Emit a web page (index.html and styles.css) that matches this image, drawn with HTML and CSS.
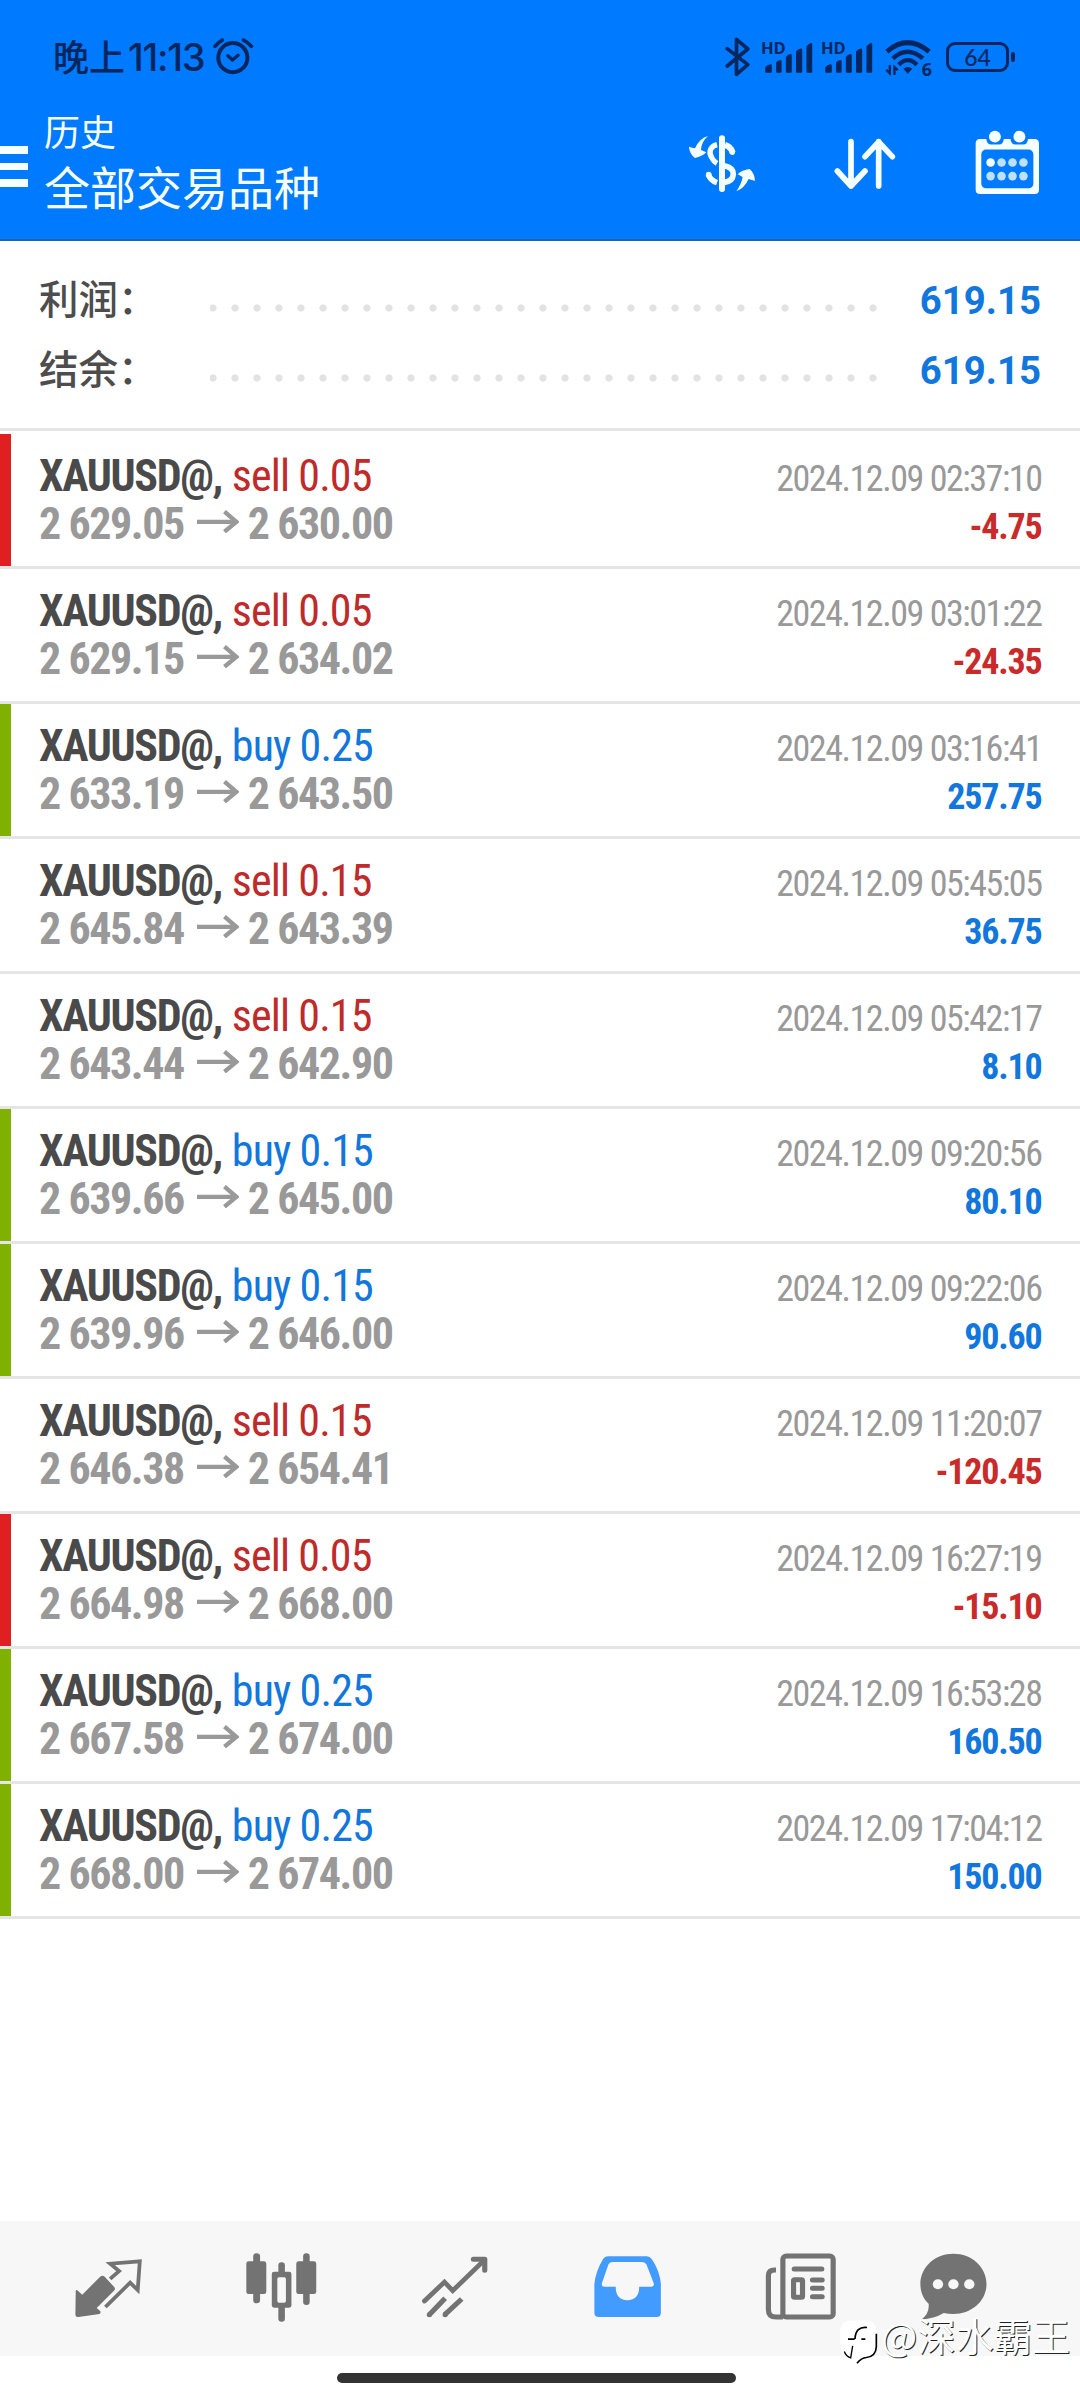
FILE: index.html
```html
<!DOCTYPE html>
<html lang="zh-CN">
<head>
<meta charset="utf-8">
<title>历史</title>
<link rel="stylesheet" href="styles.css">
</head>
<body>
<svg class="defs" width="0" height="0">
  <symbol id="arrow" viewBox="0 0 127 68"><path d="M0 35H120M83 4L119 35L83 65" fill="none" stroke="currentColor" stroke-width="13"/></symbol>
  <symbol id="signal" viewBox="0 0 154 104"><path d="M9 94v-14q5-8 16-9q4 0 4 4v19q0 3-3 3h-14q-3 0-3-3zM42 66q5-7 13-8q4 0 4 4v32q0 3-3 3h-11q-3 0-3-3zM72 49q5-8 14-9q4 0 4 4v50q0 3-3 3h-12q-3 0-3-3zM103 32q6-8 15-9q4 0 4 4v67q0 3-3 3h-13q-3 0-3-3zM135 17q6-9 14-11q4 0 4 4v84q0 3-3 3h-12q-3 0-3-3z" fill="currentColor"/></symbol>
</svg>
<div class="screen">
  <header class="header">
    <div class="status">
      <div class="status-left">
        <span class="daypart">晚上</span><span class="time">11:13</span>
        <svg class="alarm" viewBox="640 112 124 114" fill="none" stroke="currentColor" stroke-linecap="round"><circle cx="700" cy="174" r="44" stroke-width="12"/><path d="M646 140Q655 128 668 121M756 140Q747 128 732 121" stroke-width="11"/><path d="M685 168L699 181L716 167" stroke-width="10" stroke-linejoin="round"/></svg>
      </div>
      <div class="status-right">
        <svg class="bt" viewBox="194 110 80 120" fill="none" stroke="currentColor" stroke-width="11" stroke-linecap="round" stroke-linejoin="round"><path d="M203 145L265 193L231 222V117L265 146L203 197"/></svg>
        <div class="sim"><svg viewBox="0 0 154 104"><use href="#signal"/></svg><span>HD</span></div>
        <div class="sim"><svg viewBox="0 0 154 104"><use href="#signal"/></svg><span>HD</span></div>
        <div class="wifi"><svg viewBox="672 118 144 112" fill="none" stroke="currentColor"><path d="M680 156Q742 102 808 156" stroke-width="15"/><path d="M698 177Q742 136 789 177" stroke-width="13"/><path d="M716 196Q743 168 771 196" stroke-width="13"/><path d="M730 208Q743 197 757 208L743 223Z" fill="currentColor" stroke="none"/><path d="M689 197V222L678 211M703 227V203L713 212" stroke-width="7"/></svg><span>6</span></div>
        <div class="battery"><span>64</span></div>
      </div>
    </div>
    <div class="toolbar">
      <div class="menu"><i></i><i></i><i></i></div>
      <div class="titles"><div class="title-small">历史</div><div class="title-big">全部交易品种</div></div>
      <div class="actions">
        <svg class="a-dollar" viewBox="84 400 204 180" fill="none" stroke="#f6ffff"><path d="M186 416V568" stroke-width="18" stroke-linecap="round"/><path d="M171 435C150 440 145 458 155 474Q161 486 171 491" stroke-width="16"/><path d="M195 436Q213 441 218 459" stroke-width="18" stroke-linecap="butt"/><circle cx="217" cy="458" r="8" fill="#f6ffff" stroke="none"/><path d="M194 498Q221 504 220 524Q218 545 194 548" stroke-width="17"/><path d="M145 524Q150 542 171 549" stroke-width="17"/><circle cx="146" cy="525" r="8.500" fill="#f6ffff" stroke="none"/><g fill="#f6ffff" stroke="none"><path d="M144 409Q119 415 105 446Q96 444 87 441Q88 462 105 475Q126 471 139 458L123 451Q124 426 144 409Z"/><path d="M229 575Q253 566 266 538Q275 541 285 543Q284 521 269 508Q246 511 233 524L248 532Q244 554 229 575Z"/></g></svg>
        <svg class="a-sort" viewBox="522 414 186 156" fill="none" stroke="#f6ffff" stroke-width="17" stroke-linecap="round" stroke-linejoin="round"><path d="M573 425V558M532 513L573 558L615 513M656 558V425M615 470L656 426L697 470"/></svg>
        <svg class="a-cal" viewBox="944 390 194 196"><path d="M955 417H977Q979 434 992 434H1015Q1028 434 1030 417H1050Q1052 434 1065 434H1089Q1101 434 1103 417H1125Q1136 419 1136 430V570Q1136 583 1123 583H958Q945 583 945 570V430Q945 419 955 417Z" fill="#f6ffff"/><rect x="962" y="449" width="157" height="117" rx="14" fill="#007aff"/><g fill="#f6ffff"><circle cx="1003" cy="410" r="18"/><circle cx="1077" cy="410" r="18"/><circle cx="990" cy="488" r="13"/></g><g fill="#bfe0ff"><circle cx="1023" cy="488" r="13"/><circle cx="1056" cy="488" r="13"/><circle cx="1089" cy="488" r="13"/><circle cx="990" cy="529" r="13"/><circle cx="1023" cy="529" r="13"/><circle cx="1056" cy="529" r="13"/><circle cx="1089" cy="529" r="13"/></g></svg>
      </div>
    </div>
  </header>
  <section class="summary">
    <div class="sum-row"><span class="label">利润：</span><span class="dots"></span><span class="amount">619.15</span></div>
    <div class="sum-row"><span class="label">结余：</span><span class="dots"></span><span class="amount">619.15</span></div>
  </section>
  <main class="deals">
    <article class="deal loss"><div class="line"><b>XAUUSD@, <span class="sell">sell 0.05</span></b><time>2024.12.09 02:37:10</time></div><div class="line"><span class="price">2 629.05<svg class="arrow"><use href="#arrow"/></svg>2 630.00</span><span class="result neg">-4.75</span></div></article>
    <article class="deal"><div class="line"><b>XAUUSD@, <span class="sell">sell 0.05</span></b><time>2024.12.09 03:01:22</time></div><div class="line"><span class="price">2 629.15<svg class="arrow"><use href="#arrow"/></svg>2 634.02</span><span class="result neg">-24.35</span></div></article>
    <article class="deal gain"><div class="line"><b>XAUUSD@, <span class="buy">buy 0.25</span></b><time>2024.12.09 03:16:41</time></div><div class="line"><span class="price">2 633.19<svg class="arrow"><use href="#arrow"/></svg>2 643.50</span><span class="result">257.75</span></div></article>
    <article class="deal"><div class="line"><b>XAUUSD@, <span class="sell">sell 0.15</span></b><time>2024.12.09 05:45:05</time></div><div class="line"><span class="price">2 645.84<svg class="arrow"><use href="#arrow"/></svg>2 643.39</span><span class="result">36.75</span></div></article>
    <article class="deal"><div class="line"><b>XAUUSD@, <span class="sell">sell 0.15</span></b><time>2024.12.09 05:42:17</time></div><div class="line"><span class="price">2 643.44<svg class="arrow"><use href="#arrow"/></svg>2 642.90</span><span class="result">8.10</span></div></article>
    <article class="deal gain"><div class="line"><b>XAUUSD@, <span class="buy">buy 0.15</span></b><time>2024.12.09 09:20:56</time></div><div class="line"><span class="price">2 639.66<svg class="arrow"><use href="#arrow"/></svg>2 645.00</span><span class="result">80.10</span></div></article>
    <article class="deal gain"><div class="line"><b>XAUUSD@, <span class="buy">buy 0.15</span></b><time>2024.12.09 09:22:06</time></div><div class="line"><span class="price">2 639.96<svg class="arrow"><use href="#arrow"/></svg>2 646.00</span><span class="result">90.60</span></div></article>
    <article class="deal"><div class="line"><b>XAUUSD@, <span class="sell">sell 0.15</span></b><time>2024.12.09 11:20:07</time></div><div class="line"><span class="price">2 646.38<svg class="arrow"><use href="#arrow"/></svg>2 654.41</span><span class="result neg">-120.45</span></div></article>
    <article class="deal loss"><div class="line"><b>XAUUSD@, <span class="sell">sell 0.05</span></b><time>2024.12.09 16:27:19</time></div><div class="line"><span class="price">2 664.98<svg class="arrow"><use href="#arrow"/></svg>2 668.00</span><span class="result neg">-15.10</span></div></article>
    <article class="deal gain"><div class="line"><b>XAUUSD@, <span class="buy">buy 0.25</span></b><time>2024.12.09 16:53:28</time></div><div class="line"><span class="price">2 667.58<svg class="arrow"><use href="#arrow"/></svg>2 674.00</span><span class="result">160.50</span></div></article>
    <article class="deal gain"><div class="line"><b>XAUUSD@, <span class="buy">buy 0.25</span></b><time>2024.12.09 17:04:12</time></div><div class="line"><span class="price">2 668.00<svg class="arrow"><use href="#arrow"/></svg>2 674.00</span><span class="result">150.00</span></div></article>
  </main>
  <nav class="nav">
    <div class="tab"><svg viewBox="215 130 200 210" preserveAspectRatio="none"><path d="M220 243Q222 239 226 243L239 255L291 201Q298 195 304 201L331 231Q337 237 331 243L281 295L291 304Q294 309 289 313L228 322Q219 323 219 315Z" fill="#737373"/><path d="M324 204L346 184L320 162L406 155L400 241L378 219L310 288" fill="none" stroke="#737373" stroke-width="11" stroke-linecap="square" stroke-linejoin="miter"/></svg></div>
    <div class="tab"><svg viewBox="716 130 200 210" preserveAspectRatio="none" fill="#737373"><rect x="714" y="155" width="58" height="98" rx="7"/><rect x="734" y="131" width="20" height="150" rx="10"/><rect x="859" y="155" width="58" height="98" rx="7"/><rect x="879" y="131" width="19" height="155" rx="9"/><rect x="807" y="158" width="19" height="178" rx="9"/><rect x="788" y="186" width="57" height="108" rx="7"/><rect x="804" y="203" width="25" height="76" rx="5" fill="#f7f7f7"/></svg></div>
    <div class="tab"><svg viewBox="1218 130 200 210" preserveAspectRatio="none" fill="none" stroke="#737373" stroke-width="14"><path d="M1231 274L1289 217L1313 243L1404 152" stroke-linecap="round"/><path d="M1373 149H1406V182" stroke-width="15" stroke-linecap="round" stroke-linejoin="round"/><path d="M1291 266L1245 315M1339 268L1290 315" stroke-width="15"/><g fill="#737373" stroke="none"><circle cx="1245" cy="315" r="7.500"/><circle cx="1291" cy="315" r="7.500"/></g></svg></div>
    <div class="tab"><svg viewBox="154 130 200 210" preserveAspectRatio="none"><path d="M158 223Q162 184 183 149Q188 140 198 140H310Q319 140 325 149Q348 184 351 223V309Q351 322 338 322H171Q158 322 158 309Z" fill="#429bff"/><path d="M199 164Q203 157 211 157H295Q304 157 309 164L330 220Q333 231 324 231H288C289 256 277 272 254 272C231 272 219 256 220 231H187Q177 231 180 220Z" fill="#f7f7f7"/></svg></div>
    <div class="tab"><svg viewBox="657 130 200 210" preserveAspectRatio="none" fill="none" stroke="#737373" stroke-width="15"><rect x="706" y="139" width="146" height="183" rx="10"/><path d="M686 181H682Q664 181 664 198V300Q664 322 686 322H706"/><path d="M739 178H819M792 211H820M792 236H820M792 261H820" stroke-linecap="round"/><rect x="737" y="210" width="26" height="53" rx="3"/></svg></div>
    <div class="tab last"><svg viewBox="1099 130 200 210" preserveAspectRatio="none"><path d="M1199 132C1252 132 1295 172 1295 223C1295 274 1252 313 1199 313Q1184 313 1171 310Q1143 327 1105 330Q1130 313 1127 282C1112 269 1103 247 1103 223C1103 172 1146 132 1199 132Z" fill="#737373"/><g fill="#f7f7f7"><circle cx="1154" cy="224" r="15"/><circle cx="1199" cy="224" r="15"/><circle cx="1245" cy="224" r="15"/></g></svg></div>
  </nav>
  <div class="home"><i></i></div>
  <div class="watermark"><svg viewBox="268 328 120 140"><path d="M306 332H348Q380 332 380 366V410Q380 440 350 443Q335 445 323 461V446L300 444Q272 436 272 408V366Q272 332 306 332Z" fill="#fff"/><g fill="none" stroke="#000" stroke-width="5"><path d="M352 353Q318 349 316 387M295 388H315M335 388H347"/><path d="M380 372V410Q379 440 350 443Q335 444 322 460"/><path d="M284 425Q289 440 303 444L309 408" stroke-width="4"/></g></svg><span>@深水霸王</span></div>
</div>
</body>
</html>
```
FILE: styles.css
```css
* { box-sizing: border-box; }
body { margin: 0; background: #fff; font-family: "Roboto Condensed", Roboto, "Noto Sans CJK SC", sans-serif; }
svg { display: block; flex: none; }
.defs { position: absolute; }
.screen { position: relative; width: 1080px; height: 2400px; display: flex; flex-direction: column; overflow: hidden; }

.header { height: 241px; background: #007aff; border-bottom: 2px solid #1c64ad; flex: none; }
.status { height: 112px; padding: 0 65px 0 53px; display: flex; justify-content: space-between; color: #03265f; }
.status-left, .status-right { display: flex; }
.daypart { font: 500 36px/48px "Noto Sans CJK SC", sans-serif; margin-top: 31px; }
.time { font: 450 38px/48px Inter, sans-serif; margin: 33px 0 0 3px; width: 84px; letter-spacing: -1.300px; }
.alarm { width: 41px; height: 38px; margin: 37px 0 0 1px; }
.bt { width: 27px; height: 40px; margin-top: 37px; }
.sim { position: relative; width: 51px; margin: 41px 0 0 9px; }
.bt + .sim { margin-left: 11px; }
.sim svg { width: 51px; height: 34px; }
.sim span { position: absolute; left: -1px; top: -2px; font: 700 16.500px/17px "Open Sans", sans-serif; }
.wifi { position: relative; width: 48px; margin: 39px 0 0 11px; }
.wifi svg { width: 48px; height: 37px; }
.wifi span { position: absolute; right: 0; bottom: 34px; font: 700 18px/18px "Open Sans", sans-serif; }
.battery { position: relative; width: 63px; height: 30px; margin: 42px 6px 0 14px; border: 3px solid; border-radius: 9px; text-align: center; font: 500 23px/25px Lato, sans-serif; }
.battery::after { content: ""; position: absolute; right: -9px; top: 7px; width: 4px; height: 10px; background: currentColor; border-radius: 2px; }

.toolbar { display: flex; }
.menu { width: 28px; display: flex; flex-direction: column; gap: 9px; margin-top: 34px; }
.menu i { height: 7.500px; background: #f6ffff; }
.titles { margin: -4px 0 0 16px; color: #f6ffff; font-family: "Noto Sans CJK SC", sans-serif; }
.title-small { font-size: 36px; line-height: 44px; }
.title-big { font-size: 46px; line-height: 60px; margin-top: 3px; }
.actions { margin-left: auto; padding-right: 40px; display: flex; align-items: flex-start; }
.a-dollar { width: 68px; height: 60px; margin-top: 21px; }
.a-sort { width: 62px; height: 52px; margin: 26px 0 0 78px; }
.a-cal { width: 65px; height: 65px; margin: 18px 0 0 79px; }

.summary { height: 190px; padding: 24px 39px 0; border-bottom: 3px solid #e5e5e5; flex: none; }
.sum-row { height: 70px; display: flex; align-items: center; }
.label { width: 171px; margin-top: -6px; color: #4d4d4d; font: 500 39.500px/60px "Noto Sans CJK SC", sans-serif; }
.dots { width: 670px; height: 8px; margin-top: 15px; background: radial-gradient(circle, #e2e2e2 3.200px, transparent 4px) -8px 0 / 22px 8px; }
.amount { margin: 1px 0 0 auto; color: #1277dd; font: 700 38.400px/60px Roboto, sans-serif; }

.deals { padding-top: 3px; flex: 1; }
.deal { height: 135px; padding: 18px 38.500px 0 39px; border-bottom: 3px solid #e5e5e5; }
.loss, .gain { background: linear-gradient(#e02020, #e02020) 0 0 / 11px 132px no-repeat; }
.gain { background-image: linear-gradient(#80b000, #80b000); }
.line { height: 48px; display: flex; justify-content: space-between; align-items: baseline; font-size: 44px; line-height: 48px; }
.line b { color: #4a4a4a; letter-spacing: -1.350px; word-spacing: 1px; }
.line b span { font-weight: 400; letter-spacing: -0.900px; word-spacing: 0; }
.line .sell { color: #bf2a2a; }
.line .buy { color: #1277dd; }
.line time { font-size: 36px; color: #999; letter-spacing: -1.450px; word-spacing: 0; }
.price { color: #999; font-weight: 700; display: flex; align-items: baseline; letter-spacing: -1.450px; word-spacing: 0; }
.arrow { width: 42px; height: 23px; margin: 0 9px 0 13px; position: relative; top: -6px; }
.result { font-size: 36px; font-weight: 700; color: #1277dd; letter-spacing: -1.200px; }
.neg { color: #c92a2a; }

.nav { height: 135px; background: #f7f7f7; display: flex; padding-left: 22px; flex: none; }
.tab { width: 173px; display: flex; justify-content: center; padding-top: 32px; }
.tab.last { width: 132px; }
.tab svg { width: 68.900px; height: 70px; overflow: visible; }
.home { height: 44px; padding-top: 17px; display: flex; justify-content: center; flex: none; }
.home i { width: 399px; height: 10px; margin-right: 7px; border-radius: 5px; background: #333; }
.watermark { position: absolute; left: 839px; top: 2314px; display: flex; color: #fff; }
.watermark svg { width: 40px; height: 47px; margin-top: 5px; }
.watermark span { font: 400 38.300px/42px "Noto Sans CJK SC", sans-serif; margin-left: 2px; text-shadow: 1px 1px 0 #222; white-space: nowrap; }
```
